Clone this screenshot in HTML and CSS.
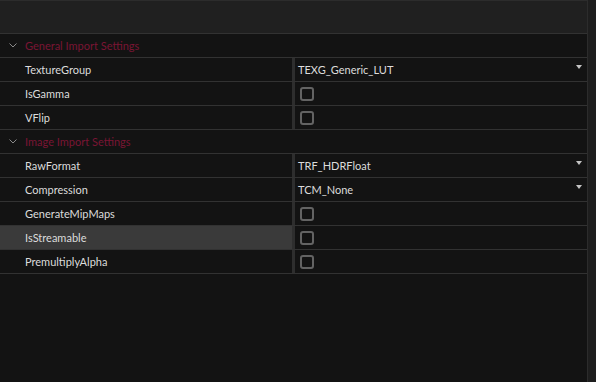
FILE: index.html
```html
<!DOCTYPE html>
<html>
<head>
<meta charset="utf-8">
<link rel="stylesheet" href="styles.css">
</head>
<body>
<div class="frame">
  <div class="main">
    <div class="toolbar"></div>
    <div class="section">
      <svg class="chev" width="8" height="5" viewBox="0 0 8 5"><path d="M0.5 0.5 L4 4 L7.5 0.5" fill="none" stroke="#8a8a8a" stroke-width="1"/></svg>
      <span>General Import Settings</span>
    </div>
    <div class="row">
      <div class="label">TextureGroup</div><div class="divider"></div>
      <div class="value"><span>TEXG_Generic_LUT</span><span class="tri"></span></div>
    </div>
    <div class="row">
      <div class="label">IsGamma</div><div class="divider"></div>
      <div class="value"><span class="check"></span></div>
    </div>
    <div class="row">
      <div class="label">VFlip</div><div class="divider"></div>
      <div class="value"><span class="check"></span></div>
    </div>
    <div class="section">
      <svg class="chev" width="8" height="5" viewBox="0 0 8 5"><path d="M0.5 0.5 L4 4 L7.5 0.5" fill="none" stroke="#8a8a8a" stroke-width="1"/></svg>
      <span>Image Import Settings</span>
    </div>
    <div class="row">
      <div class="label">RawFormat</div><div class="divider"></div>
      <div class="value"><span>TRF_HDRFloat</span><span class="tri"></span></div>
    </div>
    <div class="row">
      <div class="label">Compression</div><div class="divider"></div>
      <div class="value"><span>TCM_None</span><span class="tri"></span></div>
    </div>
    <div class="row">
      <div class="label">GenerateMipMaps</div><div class="divider"></div>
      <div class="value"><span class="check"></span></div>
    </div>
    <div class="row hover">
      <div class="label">IsStreamable</div><div class="divider"></div>
      <div class="value"><span class="check"></span></div>
    </div>
    <div class="row">
      <div class="label">PremultiplyAlpha</div><div class="divider"></div>
      <div class="value"><span class="check"></span></div>
    </div>
  </div>
  <div class="scroll"></div>
</div>
</body>
</html>
```

FILE: styles.css
```css
html, body {
  margin: 0;
  padding: 0;
  background: #131313;
}
.frame {
  display: flex;
  width: 596px;
  height: 382px;
  font-family: Lato, "Noto Sans", sans-serif;
  font-size: 11px;
  color: #dcdcdc;
}
.main {
  flex: 1;
  display: flex;
  flex-direction: column;
}
.toolbar {
  height: 32px;
  background: #202020;
  border-top: 1px solid #2c2c2c;
  border-bottom: 1px solid #323232;
}
.section {
  height: 23px;
  border-bottom: 1px solid #323232;
  display: flex;
  align-items: center;
  color: #7a1533;
}
.chev {
  margin-left: 9px;
  margin-right: 8px;
}
.row {
  height: 23px;
  border-bottom: 1px solid #323232;
  display: flex;
}
.label {
  width: 267px;
  padding-left: 25px;
  display: flex;
  align-items: center;
}
.hover .label {
  background: #3a3a3a;
}
.divider {
  width: 3px;
  background: #2e2e2e;
}
.value {
  flex: 1;
  display: flex;
  align-items: center;
  justify-content: space-between;
  padding-left: 3px;
  padding-right: 5px;
}
.tri {
  width: 0;
  height: 0;
  border-left: 3.5px solid transparent;
  border-right: 3.5px solid transparent;
  border-top: 4px solid #c4c4c4;
  margin-bottom: 6px;
}
.check {
  width: 10px;
  height: 10px;
  border: 2px solid #636363;
  border-radius: 3px;
  margin-left: 2px;
}
.scroll {
  width: 8px;
  background: #1e1e1e;
  border-left: 1px solid #2c2c2c;
}
```
